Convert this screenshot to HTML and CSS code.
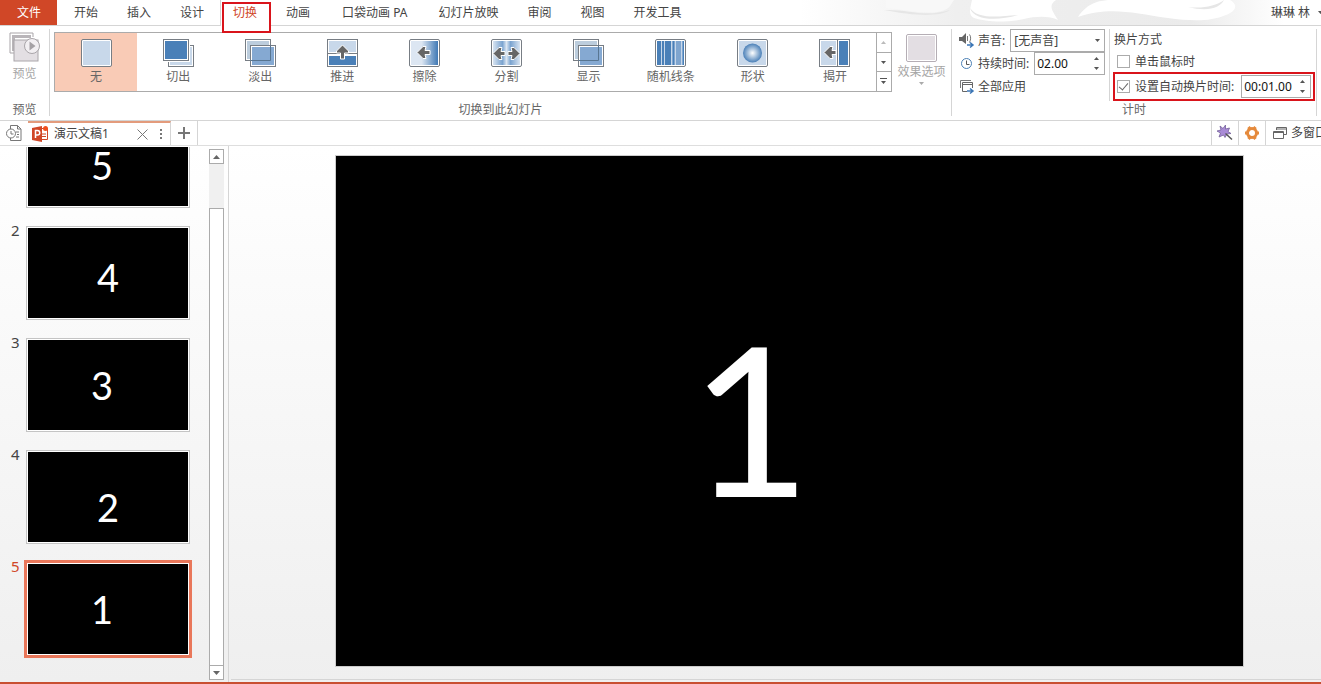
FILE: index.html
```html
<!DOCTYPE html>
<html lang="zh-CN">
<head>
    <meta charset="UTF-8">
    <meta name="viewport" content="width=device-width, initial-scale=1.0">
    <title>演示文稿1</title>
    <link rel="stylesheet" href="styles.css">
</head>
<body>
    <!-- Ribbon tabs -->
    <header class="tab-bar">
        <svg class="banner" viewBox="0 0 521 25" preserveAspectRatio="xMaxYMid slice" aria-hidden="true">
            <defs>
                <linearGradient id="fade" x1="0" x2="1" y1="0" y2="0">
                    <stop offset="0" stop-color="#fff"/>
                    <stop offset="0.3" stop-color="#efefef"/>
                    <stop offset="0.75" stop-color="#ebebeb"/>
                    <stop offset="0.93" stop-color="#fff"/>
                </linearGradient>
            </defs>
            <rect width="521" height="25" fill="url(#fade)"/>
            <path d="M86 0h68c-4 5-3 8-12 11-15 4-35-1-56-3z" fill="#f8f8f8"/>
            <path d="M84 10c25-1 40 8 66 0-10 7-36 6-66 0z" fill="#e6e6e6"/>
            <path d="M172 0h84c-8 5-4 11 2 20-8-4-22-4-34-1-18 4-38 3-50-1-6-3-4-9-2-18z" fill="#fff"/>
            <path d="M170 8c8 11 25 9 48 7-20 6-44 6-48-7z" fill="#e6e6e6"/>
            <path d="M278 17C288 2 300 1 308 0h122c10 6 4 12-4 15-16 7-36 6-58 3-35-5-58-12-90-1z" fill="#fff"/>
            <path d="M388 7c14 2 28-1 36-7-4 8-16 12-36 7z" fill="#e6e6e6"/>
        </svg>
        <button class="tab tab-file">文件</button>
        <nav class="tabs">
            <button class="tab">开始</button>
            <button class="tab">插入</button>
            <button class="tab">设计</button>
            <button class="tab tab-active">切换</button>
            <button class="tab">动画</button>
            <button class="tab tab-addin">口袋动画 PA</button>
            <button class="tab">幻灯片放映</button>
            <button class="tab">审阅</button>
            <button class="tab">视图</button>
            <button class="tab">开发工具</button>
        </nav>
        <button class="account">琳琳 林
            <svg width="5" height="3" viewBox="0 0 5 3"><path d="M0 0h5L2.5 3z" fill="#555"/></svg>
        </button>
    </header>

    <!-- Ribbon -->
    <section class="ribbon">
        <div class="group group-preview">
            <button class="big-btn" disabled>
                <svg width="32" height="32" viewBox="0 0 32 32" fill="none">
                    <path d="M5 21H1V1h23v4" stroke="#a9a5a9"/>
                    <path d="M3 19V3h19v3H6v13z" fill="#b9b5b9"/>
                    <rect x="5" y="8" width="24" height="21" fill="#e3dfe3" stroke="#aaa6aa"/>
                    <circle cx="23" cy="14" r="7.5" fill="#f2eff2" stroke="#a9a5a9"/>
                    <path d="M20.500 9.500v9l6-4.500z" fill="#a5a1a5"/>
                </svg>
                <span>预览</span>
            </button>
            <h2 class="group-title">预览</h2>
        </div>

        <div class="group group-transition">
            <div class="group-body">
                <div class="gallery">
                    <button class="effect effect-selected">
                        <svg width="31" height="28" viewBox="0 0 31 28"><rect x=".5" y=".5" width="30" height="27" rx="1.500" fill="#fff" stroke="#777d84"/><rect x="2" y="2" width="27" height="24" fill="#c8d8ea"/></svg>
                        <span>无</span>
                    </button>
                    <button class="effect">
                        <svg width="31" height="28" viewBox="0 0 31 28"><rect x="5.500" y="6.500" width="25" height="21" fill="#fff" stroke="#777d84"/><rect x="7" y="8" width="22" height="18" fill="#c8d8ea"/><rect x="0" y="0" width="27" height="23" fill="#fff"/><rect x=".5" y=".5" width="25" height="21" fill="#fff" stroke="#777d84"/><rect x="2" y="2" width="22" height="18" fill="#4a80b8"/></svg>
                        <span>切出</span>
                    </button>
                    <button class="effect">
                        <svg width="31" height="28" viewBox="0 0 31 28"><rect x=".5" y=".5" width="25" height="21" fill="#fff" stroke="#777d84"/><rect x="2" y="2" width="22" height="18" fill="#bccddd"/><rect x="5.500" y="6.500" width="25" height="21" fill="#fff" stroke="#777d84"/><rect x="7" y="8" width="22" height="18" fill="#85a9d2"/><path d="M5.500 21.500h20v-15" fill="none" stroke="#587692"/></svg>
                        <span>淡出</span>
                    </button>
                    <button class="effect">
                        <svg width="31" height="28" viewBox="0 0 31 28"><rect x=".5" y=".5" width="30" height="27" fill="#fff" stroke="#777d84"/><rect x="2" y="2" width="27" height="11" fill="#c8d8ea"/><rect x="2" y="17" width="27" height="9" fill="#4a80b8"/><path d="M1 14.500h29" stroke="#777d84"/><path d="M15.500 6l6 6v2h-4v6h-4v-6h-4v-2z" fill="#666" stroke="#fff"/></svg>
                        <span>推进</span>
                    </button>
                    <button class="effect">
                        <svg width="31" height="28" viewBox="0 0 31 28"><defs><linearGradient id="wipe"><stop offset=".4" stop-color="#dce6f2"/><stop offset="1" stop-color="#4079b5"/></linearGradient></defs><rect x=".5" y=".5" width="30" height="27" rx="1.500" fill="#fff" stroke="#777d84"/><rect x="2" y="2" width="27" height="24" fill="url(#wipe)"/><path d="M8 13.500l6-6h3l-1 4h5v4h-5l1 4h-3z" fill="#666" stroke="#fff"/></svg>
                        <span>擦除</span>
                    </button>
                    <button class="effect">
                        <svg width="31" height="28" viewBox="0 0 31 28"><defs><linearGradient id="split"><stop offset="0" stop-color="#d8e4f1"/><stop offset=".35" stop-color="#7ba4d0"/><stop offset=".5" stop-color="#dce6f2"/><stop offset=".65" stop-color="#7ba4d0"/><stop offset="1" stop-color="#d8e4f1"/></linearGradient></defs><rect x=".5" y=".5" width="30" height="27" rx="1.500" fill="#fff" stroke="#777d84"/><rect x="2" y="2" width="27" height="24" fill="url(#split)"/><path d="M2 14.500l6-6h3l-1 4h4v4h-4l1 4H8z M29 14.500l-6-6h-3l1 4h-4v4h4l-1 4h3z" fill="#666" stroke="#fff"/></svg>
                        <span>分割</span>
                    </button>
                    <button class="effect">
                        <svg width="31" height="28" viewBox="0 0 31 28"><rect x=".5" y=".5" width="25" height="21" fill="#fff" stroke="#777d84"/><rect x="2" y="2" width="22" height="18" fill="#bccddd"/><rect x="5.500" y="6.500" width="25" height="21" fill="#fff" stroke="#777d84"/><rect x="7" y="8" width="22" height="18" fill="#85a9d2"/><path d="M5.500 21.500h20v-15" fill="none" stroke="#587692"/></svg>
                        <span>显示</span>
                    </button>
                    <button class="effect">
                        <svg width="31" height="28" viewBox="0 0 31 28"><rect x=".5" y=".5" width="30" height="27" rx="1.500" fill="#fff" stroke="#777d84"/><rect x="2" y="2" width="14" height="24" fill="#4a80b8"/><rect x="16" y="2" width="13" height="24" fill="#7fa5cf"/><path d="M6.500 2v24M9.500 2v24M16.500 2v24M20.500 2v24M26.500 2v24" stroke="#c8d8ea"/><path d="M18.500 2v24M28.500 2v24" stroke="#4a80b8"/></svg>
                        <span>随机线条</span>
                    </button>
                    <button class="effect">
                        <svg width="31" height="28" viewBox="0 0 31 28"><defs><radialGradient id="shape"><stop offset="0" stop-color="#fff"/><stop offset="1" stop-color="#4a80b8"/></radialGradient></defs><rect x=".5" y=".5" width="30" height="27" rx="1.500" fill="#fff" stroke="#777d84"/><rect x="2" y="2" width="27" height="24" fill="#c8d8ea"/><circle cx="15.500" cy="14" r="9.500" fill="url(#shape)"/></svg>
                        <span>形状</span>
                    </button>
                    <button class="effect">
                        <svg width="31" height="28" viewBox="0 0 31 28"><rect x=".5" y=".5" width="30" height="27" fill="#fff" stroke="#777d84"/><rect x="2" y="2" width="15" height="24" fill="#c8d8ea"/><path d="M18.500 1v26" stroke="#777d84"/><rect x="20" y="2" width="9" height="24" fill="#4a80b8"/><path d="M5 13.500l6-6h3l-1 4h4v4h-4l1 4h-3z" fill="#666" stroke="#fff"/></svg>
                        <span>揭开</span>
                    </button>
                    <div class="gallery-scroll">
                        <button aria-label="上一行" disabled><svg width="5" height="3" viewBox="0 0 5 3"><path d="M0 3h5L2.500 0z" fill="#bbb"/></svg></button>
                        <button aria-label="下一行"><svg width="5" height="3" viewBox="0 0 5 3"><path d="M0 0h5L2.500 3z" fill="#555"/></svg></button>
                        <button aria-label="其他"><svg width="7" height="7" viewBox="0 0 7 7"><path d="M0 0h7v1H0zM1 3h5L3.500 6z" fill="#555"/></svg></button>
                    </div>
                </div>
                <button class="big-btn" disabled>
                    <svg width="31" height="28" viewBox="0 0 31 28"><rect x=".5" y=".5" width="30" height="27" rx="1.500" fill="#fff" stroke="#b5aeb5"/><rect x="2" y="2" width="27" height="24" fill="#e3dee3"/></svg>
                    <span>效果选项</span>
                    <svg width="5" height="3" viewBox="0 0 5 3"><path d="M0 0h5L2.500 3z" fill="#aaa"/></svg>
                </button>
            </div>
            <h2 class="group-title">切换到此幻灯片</h2>
        </div>

        <div class="group group-timing">
            <div class="group-body">
                <div class="timing-left">
                    <div class="row">
                        <svg width="16" height="16" viewBox="0 0 16 16" fill="none"><path d="M0 4h3l4-4v11L3 8H0z" fill="#666"/><path d="M8.500 3v5M10.500 1.500c1.500 2 1.500 5 0 8" stroke="#777"/><path d="M8 12h5M11 9.500l3 2.500-3 2.500" stroke="#3c76b5" stroke-width="1.500"/></svg>
                        <label for="sound">声音:</label>
                        <div class="select-box">
                            <select id="sound"><option>[无声音]</option></select>
                            <svg width="5" height="3" viewBox="0 0 5 3"><path d="M0 0h5L2.500 3z" fill="#555"/></svg>
                        </div>
                    </div>
                    <div class="row">
                        <svg width="16" height="16" viewBox="0 0 16 16" fill="none"><circle cx="7.500" cy="7.500" r="5" stroke="#4a7fb5"/><path d="M7.500 4.500v4h3" stroke="#555"/></svg>
                        <label for="duration">持续时间:</label>
                        <div class="spin">
                            <input type="text" id="duration" value="02.00">
                            <div class="spin-btns">
                                <button aria-label="增加"><svg width="5" height="3" viewBox="0 0 5 3"><path d="M0 3h5L2.500 0z" fill="#555"/></svg></button>
                                <button aria-label="减少"><svg width="5" height="3" viewBox="0 0 5 3"><path d="M0 0h5L2.500 3z" fill="#555"/></svg></button>
                            </div>
                        </div>
                    </div>
                    <button class="row apply-all">
                        <svg width="16" height="16" viewBox="0 0 16 16" fill="none"><path d="M1.500 9V1.500H12" stroke="#777"/><path d="M8 12.500H3.500v-9h10V9M4 5.500h9" stroke="#666"/><path d="M8 12h5M11 9.500l3 2.500-3 2.500" stroke="#3c76b5" stroke-width="1.500"/></svg>
                        <span>全部应用</span>
                    </button>
                </div>
                <div class="timing-right">
                    <div class="row row-head">换片方式</div>
                    <div class="row row-check">
                        <input type="checkbox" id="on-click">
                        <label for="on-click">单击鼠标时</label>
                    </div>
                    <div class="row row-check row-marked">
                        <input type="checkbox" id="auto" checked>
                        <label for="auto">设置自动换片时间:</label>
                        <div class="spin">
                            <input type="text" value="00:01.00" aria-label="自动换片时间">
                            <div class="spin-btns">
                                <button aria-label="增加"><svg width="5" height="3" viewBox="0 0 5 3"><path d="M0 3h5L2.500 0z" fill="#555"/></svg></button>
                                <button aria-label="减少"><svg width="5" height="3" viewBox="0 0 5 3"><path d="M0 0h5L2.500 3z" fill="#555"/></svg></button>
                            </div>
                        </div>
                    </div>
                </div>
            </div>
            <h2 class="group-title">计时</h2>
        </div>
    </section>

    <!-- Open documents -->
    <div class="doc-bar">
        <button class="doc-recent" aria-label="最近文档">
            <svg width="16" height="16" viewBox="0 0 16 16" fill="none" stroke="#777"><path d="M4.500 4V.5h7l3.500 3.500v11.500H4.500V13M11.500.5V4H15M10 7h3M11 9.500h2M10 12h3"/><circle cx="5" cy="8.500" r="4.500" fill="#fff"/><path d="M5 6v3h2.500"/></svg>
        </button>
        <div class="doc-tab">
            <svg width="16" height="16" viewBox="0 0 16 16"><path d="M9 2.500h6.500v11H9z" fill="#fff" stroke="#d04727"/><path d="M9 8h5M9 10.500h5" stroke="#d04727"/><path d="M0 2l10-2v16L0 14z" fill="#d04727"/><path d="M3.500 12V4.500h2a2.200 2.200 0 0 1 0 4.500h-2" fill="none" stroke="#fff" stroke-width="1.500"/><circle cx="13.500" cy="2.500" r="2.500" fill="#f0501e"/></svg>
            <span>演示文稿1</span>
            <button class="doc-close" aria-label="关闭"><svg width="11" height="11" viewBox="0 0 11 11"><path d="M.5.5l10 10M10.500.5l-10 10" stroke="#777"/></svg></button>
            <button aria-label="更多"><svg width="3" height="11" viewBox="0 0 3 11"><path d="M0 0h2v2H0zM0 4h2v2H0zM0 8h2v2H0z" fill="#777"/></svg></button>
        </div>
        <button class="doc-new" aria-label="新建"><svg width="12" height="12" viewBox="0 0 12 12"><path d="M6 0v12M0 6h12" stroke="#777" stroke-width="2"/></svg></button>
        <div class="doc-tools">
            <button aria-label="美化"><svg width="16" height="16" viewBox="0 0 16 16"><path d="M3 1l3 2.500L8.500 0v4l4-1L11 6.500l3 2-4 .5-2 3.500L6.500 10 2 12l1.500-4L0 6l4-1z" fill="#a98bd6" stroke="#75619a" stroke-width=".8"/><path d="M8.500 8.500l6.500 6" stroke="#555" stroke-width="1.500"/></svg></button>
            <button aria-label="设置"><svg width="16" height="16" viewBox="0 0 16 16" fill="none" stroke="#e58a3c"><circle cx="8" cy="8" r="4.500" stroke-width="3"/><path d="M4.500 2l1.500 2M11.500 2L10 4M1 8h2M13 8h2M4.500 14L6 12M11.500 14L10 12" stroke-width="3"/></svg></button>
            <button class="multi-window"><svg width="14" height="12" viewBox="0 0 14 12" fill="none" stroke="#666"><path d="M3.500 3V.5h10v7H11M4 2h9"/><path d="M.5 4.500h10v7H.5zM1 5.500h9"/></svg><span>多窗口</span></button>
        </div>
    </div>

    <main class="workspace">
        <aside class="thumbs">
            <ol class="thumb-list">
                <li><span class="num"></span><div class="thumb text-left text-low">5</div></li>
                <li><span class="num">2</span><div class="thumb text-low">4</div></li>
                <li><span class="num">3</span><div class="thumb text-left">3</div></li>
                <li><span class="num">4</span><div class="thumb text-lower">2</div></li>
                <li class="current"><span class="num">5</span><div class="thumb text-left">1</div></li>
            </ol>
            <div class="scrollbar">
                <button aria-label="向上滚动"><svg width="7" height="4" viewBox="0 0 7 4"><path d="M0 4h7L3.500 0z" fill="#666"/></svg></button>
                <div class="scroll-track"><div class="scroll-thumb"></div></div>
                <button aria-label="向下滚动"><svg width="7" height="4" viewBox="0 0 7 4"><path d="M0 0h7L3.500 4z" fill="#666"/></svg></button>
            </div>
        </aside>
        <section class="editor">
            <div class="slide">1</div>
        </section>
    </main>
</body>
</html>
```
FILE: styles.css
```css
:root {
    --accent: #d04727;
    --mark: #d9141b;
    --line: #d5d5d5;
    --border: #ababab;
    --text: #444;
    --text-muted: #666;
    --disabled: #a6a6a6;
}

* {
    box-sizing: border-box;
    margin: 0;
    padding: 0;
}

body {
    display: flex;
    flex-direction: column;
    height: 100vh;
    overflow: hidden;
    font-family: "Noto Sans", "Noto Sans CJK SC", sans-serif;
    font-size: 12px;
    line-height: 16px;
    color: var(--text);
    background: #fff;
}

button, input, select {
    font: inherit;
    color: inherit;
    background: none;
    border: none;
    border-radius: 0;
    white-space: nowrap;
}

svg {
    display: block;
    flex-shrink: 0;
}

/* Ribbon tabs */
.tab-bar {
    position: relative;
    display: flex;
    height: 26px;
    border-bottom: 1px solid var(--line);
}

.banner {
    position: absolute;
    right: 0;
    top: 0;
    width: 521px;
    height: 25px;
    z-index: -1;
}

.tab {
    padding: 0 14px 0 15px;
}

.tab-file {
    width: 57px;
    background: var(--accent);
    color: #fff;
}

.tabs {
    display: flex;
    padding-left: 2px;
}

.tab-addin {
    padding: 0 16px 0 18px;
}

.tab-active {
    position: relative;
    color: var(--accent);
    background: #fff;
    border-left: 1px solid var(--line);
    margin: 0 0 -1px 2px;
    padding-left: 12px;
}

.tab-active::after {
    content: "";
    position: absolute;
    left: 1px;
    right: 0;
    top: 2px;
    height: 27px;
    border: 2px solid var(--mark);
    z-index: 1;
}

.account {
    display: flex;
    align-items: center;
    gap: 8px;
    margin-left: auto;
    margin-right: -2px;
}

/* Ribbon */
.ribbon {
    display: flex;
    height: 95px;
    padding: 3px 4px 4px 0;
    border-bottom: 1px solid var(--line);
}

.group {
    display: flex;
    flex-direction: column;
    border-right: 1px solid var(--line);
}

.group-preview {
    width: 50px;
    padding-top: 1px;
}

.group-transition {
    flex: 1;
    padding-top: 3px;
}

.group-body {
    display: flex;
}

.group-title {
    margin-top: auto;
    line-height: 13px;
    font-size: 12px;
    font-weight: 400;
    text-align: center;
    color: var(--text-muted);
}

.big-btn {
    display: flex;
    flex-direction: column;
    align-items: center;
    gap: 2px;
    width: 59px;
    padding-top: 2px;
    color: var(--disabled);
}

.group-preview .big-btn {
    width: auto;
}

.gallery {
    display: flex;
    flex: 1;
    height: 60px;
    margin-left: 4px;
    border: 1px solid var(--border);
}

.effect {
    flex: 1;
    display: flex;
    flex-direction: column;
    align-items: center;
    gap: 2px;
    padding-top: 6px;
    color: var(--text-muted);
}

.effect-selected {
    background: #f9cbb6;
}

.gallery-scroll {
    display: flex;
    flex-direction: column;
    width: 15px;
    border-left: 1px solid var(--border);
}

.gallery-scroll button {
    flex: 1;
    display: flex;
    align-items: center;
    justify-content: center;
}

.gallery-scroll button + button {
    border-top: 1px solid var(--border);
}

/* Timing group */
.group-timing {
    width: 365px;
}

.timing-left {
    display: flex;
    flex-direction: column;
    width: 158px;
    padding: 0 4px 0 7px;
    border-right: 1px solid var(--line);
}

.timing-right {
    flex: 1;
    padding-left: 4px;
}

.row {
    display: flex;
    align-items: center;
    gap: 3px;
    height: 23px;
    white-space: nowrap;
}

.row-head {
    height: 22px;
}

.row-check {
    gap: 5px;
    height: 21px;
    padding-left: 3px;
}

.select-box {
    position: relative;
    flex: 1;
    margin-left: 2px;
}

.select-box select {
    appearance: none;
    display: block;
    width: 100%;
    height: 23px;
    padding-left: 3px;
    border: 1px solid var(--border);
    background: #fff;
}

.select-box svg {
    position: absolute;
    right: 5px;
    top: 10px;
    pointer-events: none;
}

.spin {
    flex: 1;
    display: flex;
    height: 23px;
    margin-left: 2px;
    border: 1px solid var(--border);
    background: #fff;
    color: #111;
}

.spin input {
    flex: 1;
    width: 0;
    padding-left: 2px;
}

.spin-btns {
    display: flex;
    flex-direction: column;
    width: 15px;
}

.spin-btns button {
    flex: 1;
    display: flex;
    align-items: center;
    justify-content: center;
}

input[type="checkbox"] {
    appearance: none;
    width: 13px;
    height: 13px;
    border: 1px solid var(--border);
    background: #fff;
}

input[type="checkbox"]:checked {
    display: grid;
    place-items: center;
}

input[type="checkbox"]:checked::before {
    content: "";
    width: 4px;
    height: 8px;
    margin-bottom: 2px;
    border: solid #666;
    border-width: 0 1px 1px 0;
    transform: rotate(40deg);
}

.row-marked {
    height: 29px;
    margin-right: 1px;
    margin-left: -1px;
    padding: 0 2px;
    border: 2px solid var(--mark);
}

/* Document tabs */
.doc-bar {
    display: flex;
    height: 25px;
    border-bottom: 1px solid #dedede;
}

.doc-bar button {
    display: flex;
    align-items: center;
    justify-content: center;
}

.doc-recent {
    width: 28px;
}

.doc-tab {
    display: flex;
    align-items: center;
    gap: 6px;
    width: 143px;
    padding: 0 7px 0 4px;
    border-top: 2px solid #e39b7c;
    border-right: 1px solid var(--line);
}

.doc-close {
    margin-left: auto;
    padding-right: 6px;
}

.doc-new {
    width: 27px;
    border-right: 1px solid var(--line);
}

.doc-tools {
    display: flex;
    margin-left: auto;
}

.doc-tools button {
    width: 27px;
    border-left: 1px solid var(--line);
}

.doc-tools .multi-window {
    width: 56px;
    justify-content: flex-start;
    gap: 4px;
    padding-left: 7px;
    overflow: hidden;
}

/* Workspace */
.workspace {
    flex: 1;
    min-height: 0;
    display: flex;
    border-bottom: 2px solid #c84f31;
    background: linear-gradient(#fff, #efefef);
}

.thumbs {
    display: flex;
    width: 229px;
    padding-top: 1px;
    border-right: 1px solid var(--line);
}

.thumb-list {
    flex: 1;
    display: flex;
    flex-direction: column;
    justify-content: flex-end;
    gap: 18px;
    padding-bottom: 26px;
    overflow: hidden;
    list-style: none;
}

.thumb-list li {
    display: flex;
    flex-shrink: 0;
}

.num {
    width: 26px;
    padding-left: 11px;
    line-height: 8px;
    font-size: 15px;
}

.thumb {
    display: flex;
    align-items: center;
    justify-content: center;
    width: 164px;
    height: 94px;
    border: 1px solid #c4c4c4;
    box-shadow: inset 0 0 0 1px #fff;
    background: #000;
    color: #fff;
    font-family: Lato, sans-serif;
    font-size: 38px;
    line-height: 40px;
}

.text-left {
    padding-right: 12px;
}

.text-low {
    padding-top: 8px;
}

.text-lower {
    padding-top: 20px;
}

.current .num {
    color: var(--accent);
}

.current .thumb {
    border-color: #e9775a;
    outline: 2px solid #e9775a;
}

.scrollbar {
    display: flex;
    flex-direction: column;
    width: 15px;
    margin: 2px 4px 2px 0;
}

.scrollbar button {
    display: flex;
    align-items: center;
    justify-content: center;
    height: 15px;
    border: 1px solid var(--border);
    background: #fff;
}

.scroll-track {
    flex: 1;
    display: flex;
    background: #f0f0f0;
}

.scroll-thumb {
    flex: 1;
    margin-top: 44px;
    border: 1px solid var(--border);
    border-bottom: none;
    background: #fff;
}

.editor {
    flex: 1;
    display: flex;
    margin: 0 0 2px 2px;
    padding: 9px 77px 12px 104px;
    border-bottom: 1px solid var(--line);
}

.slide {
    flex: 1;
    display: flex;
    align-items: center;
    justify-content: center;
    padding: 12px 78px 0 0;
    border: 1px solid #ccc;
    background: #000;
    color: #fff;
    font-family: Lato, sans-serif;
    font-size: 208px;
    line-height: 208px;
}
```
